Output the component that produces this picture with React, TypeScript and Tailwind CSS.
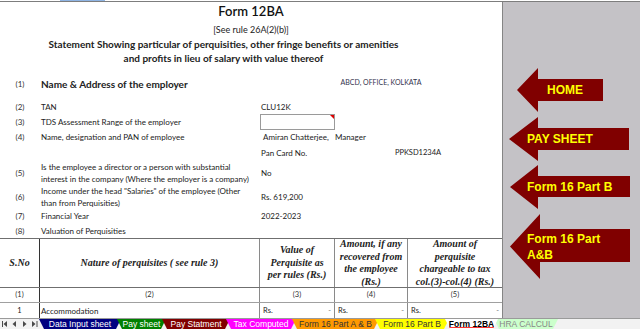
import React from 'react';

const sans = "font-['Lato','Liberation_Sans',sans-serif]";

function InfoRow({
  n,
  h,
  label,
  children,
}: {
  n?: string;
  h: string;
  label?: React.ReactNode;
  children?: React.ReactNode;
}) {
  return (
    <div className={`flex items-center ${h}`}>
      <div className="w-[40px] text-center text-[8px] text-[#333]">{n}</div>
      <div className="w-[220px] pl-[1px] text-[8px] leading-[12px]">{label}</div>
      <div className="flex-1 text-[8px] flex items-center h-full">{children}</div>
    </div>
  );
}

function Sheet() {
  return (
    <div className={`w-[502px] flex flex-col text-[#222] ${sans}`}>
      <div className="h-[20px] flex items-center justify-center text-[13px] font-semibold text-[#111]">Form 12BA</div>
      <div className="h-[15px] flex items-center justify-center text-[9px]">[See rule 26A(2)(b)]</div>
      <div className="h-[15px] flex items-center justify-center pr-[55px] text-[10px] font-bold">
        Statement Showing particular of perquisities, other fringe benefits or amenities
      </div>
      <div className="h-[12px] flex items-center justify-center pr-[55px] text-[10px] font-bold">
        and profits in lieu of salary with value thereof
      </div>
      <div className="h-[11px]" />
      <div className="flex items-center h-[18px]">
        <div className="w-[40px] text-center text-[8px] text-[#333]">(1)</div>
        <div className="w-[220px] pl-[1px] text-[10px] font-bold text-[#222]">Name &amp; Address of the employer</div>
        <div className="flex-1 text-center text-[7px] text-[#33334d] -mt-[4px]">ABCD, OFFICE, KOLKATA</div>
      </div>
      <div className="h-[6px]" />
      <InfoRow n="(2)" h="h-[15px]" label="TAN">
        <span className="pl-[1px]">CLU12K</span>
      </InfoRow>
      <InfoRow n="(3)" h="h-[16px]" label="TDS Assessment Range of the employer">
        <div className="relative w-[75px] h-full border border-[#9a9a9a]">
          <div className="absolute right-0 top-0 w-0 h-0 border-t-[4px] border-l-[4px] border-t-[#e00000] border-l-transparent" />
        </div>
      </InfoRow>
      <InfoRow n="(4)" h="h-[14px]" label="Name, designation and PAN of employee">
        <span className="pl-[3px] whitespace-pre">Amiran Chatterjee,   Manager</span>
      </InfoRow>
      <InfoRow h="h-[17px]">
        <span className="w-[74px] pl-[1px]">Pan Card No.</span>
        <span className="w-[168px] text-center text-[7.5px]">PPKSD1234A</span>
      </InfoRow>
      <InfoRow
        n="(5)"
        h="h-[24px]"
        label={
          <>
            Is the employee a director or a person with substantial
            <br />
            interest in the company (Where the employer is a company)
          </>
        }
      >
        <span className="pl-[1px]">No</span>
      </InfoRow>
      <InfoRow
        n="(6)"
        h="h-[23px]"
        label={
          <>
            Income under the head "Salaries" of the employee (Other
            <br />
            than from Perquisities)
          </>
        }
      >
        <span className="pl-[1px]">Rs. 619,200</span>
      </InfoRow>
      <InfoRow n="(7)" h="h-[15px]" label="Financial Year">
        <span className="pl-[1px]">2022-2023</span>
      </InfoRow>
      <InfoRow n="(8)" h="h-[15px]" label="Valuation of Perquisities" />

      <div className="flex h-[50px] border-y border-[#6f6f6f] font-['Liberation_Serif',serif] font-bold italic text-[10px] leading-[12.5px] text-center text-[#222]">
        <div className="w-[40px] border-r border-[#333] flex items-center justify-center">S.No</div>
        <div className="w-[220px] border-r border-[#8a8a8a] flex items-center justify-center">Nature of perquisites ( see rule 3)</div>
        <div className="w-[75px] border-r border-[#8a8a8a] flex items-center justify-center">
          Value of
          <br />
          Perquisite as
          <br />
          per rules (Rs.)
        </div>
        <div className="w-[73px] border-r border-[#8a8a8a] flex items-center justify-center">
          Amount, if any
          <br />
          recovered from
          <br />
          the employee
          <br />
          (Rs.)
        </div>
        <div className="w-[94px] flex items-center justify-center">
          Amount of
          <br />
          perquisite
          <br />
          chargeable to tax
          <br />
          col.(3)-col.(4) (Rs.)
        </div>
      </div>
      <div className="flex h-[15px] border-b border-[#a0a0a0] text-[7.5px] text-center text-[#333]">
        <div className="w-[40px] border-r border-[#333] flex items-center justify-center">(1)</div>
        <div className="w-[220px] border-r border-[#8a8a8a] flex items-center justify-center">(2)</div>
        <div className="w-[75px] border-r border-[#8a8a8a] flex items-center justify-center">(3)</div>
        <div className="w-[73px] border-r border-[#8a8a8a] flex items-center justify-center">(4)</div>
        <div className="w-[94px] flex items-center justify-center">(5)</div>
      </div>
      <div className="flex flex-1 text-[7.5px] text-[#222]">
        <div className="w-[40px] border-r border-[#333] flex items-center justify-center">1</div>
        <div className="w-[220px] border-r border-[#8a8a8a] flex items-center pl-[1px] text-[8px]">Accommodation</div>
        <div className="w-[75px] border-r border-[#8a8a8a] flex items-center justify-between px-[3px]">
          <span>Rs.</span>
          <span className="text-[#777]">-</span>
        </div>
        <div className="w-[73px] border-r border-[#8a8a8a] flex items-center justify-between px-[3px]">
          <span>Rs.</span>
          <span className="text-[#777]">-</span>
        </div>
        <div className="w-[94px] flex items-center justify-between px-[3px]">
          <span>Rs.</span>
          <span className="text-[#777]">-</span>
        </div>
      </div>
    </div>
  );
}

function Arrow({
  w,
  h,
  head,
  top,
  bottom,
  className,
  textClass,
  children,
}: {
  w: number;
  h: number;
  head: number;
  top: number;
  bottom: number;
  className: string;
  textClass: string;
  children: React.ReactNode;
}) {
  const pts = `0,${h / 2} ${head},0 ${head},${top} ${w},${top} ${w},${bottom} ${head},${bottom} ${head},${h} `;
  return (
    <div className={`relative ${className}`}>
      <svg width={w} height={h} className="block">
        <polygon points={pts} fill="#800000" />
      </svg>
      <div
        className={`absolute top-0 h-full flex items-center font-['Liberation_Sans',Arial,sans-serif] font-bold text-[12px] leading-[16px] text-[#ffff00] ${textClass}`}
      >
        {children}
      </div>
    </div>
  );
}

function Panel() {
  return (
    <div className="flex-1 bg-[#c4c2c6] border-l border-[#858585] flex flex-col">
      <Arrow w={86} h={44} head={21} top={11} bottom={33} className="mt-[66px] ml-[14px] w-[86px] h-[44px]" textClass="left-[30px]">
        HOME
      </Arrow>
      <Arrow w={120} h={44} head={29} top={11} bottom={33} className="mt-[5px] ml-[6px] w-[120px] h-[44px]" textClass="left-[18px]">
        PAY SHEET
      </Arrow>
      <Arrow w={120} h={44} head={28} top={11} bottom={32} className="mt-[4px] ml-[7px] w-[120px] h-[44px]" textClass="left-[17px]">
        Form 16 Part B
      </Arrow>
      <Arrow w={120} h={65} head={30} top={15} bottom={48} className="mt-[5px] ml-[7px] w-[120px] h-[65px]" textClass="left-[17px]">
        <span>
          Form 16 Part
          <br />
          A&amp;B
        </span>
      </Arrow>
    </div>
  );
}

const tabs = [
  { label: 'Data Input sheet', cls: 'w-[82px] bg-[#000080] text-white' },
  { label: 'Pay sheet', cls: 'w-[49px] bg-[#008000] text-white' },
  { label: 'Pay Statment', cls: 'w-[68px] bg-[#800000] text-white' },
  { label: 'Tax Computed', cls: 'w-[70px] bg-[#ff00ff] text-white' },
  { label: 'Form 16 Part A & B', cls: 'w-[87px] bg-[#ff9900] text-[#333]' },
  { label: 'Form 16 Part B', cls: 'w-[74px] bg-[#ffff00] text-[#333]' },
  { label: 'Form 12BA', cls: 'w-[53px] bg-white text-black font-bold z-10', active: true },
  { label: 'HRA CALCUL', cls: 'w-[64px] bg-[#ccffcc] text-[#888]' },
];

function NavBtn({ d }: { d: string }) {
  return (
    <svg width="6" height="6" viewBox="0 0 6 6" className="block">
      <path d={d} fill="#4a4a4a" />
    </svg>
  );
}

function Tabs() {
  return (
    <div className="h-[11px] flex items-stretch bg-[#f2f2f2] border-t border-[#9a9a9a] font-['Liberation_Sans',sans-serif] text-[8.5px]">
      <div className="w-[39px] flex items-center gap-[4px] pl-[2px]">
        <NavBtn d="M0 0h1v6H0zM5 0v6L1.5 3z" />
        <NavBtn d="M4 0v6L0.5 3z" />
        <NavBtn d="M1 0v6L4.5 3z" />
        <NavBtn d="M0 0v6L3.5 3zM4.5 0h1v6h-1z" />
      </div>
      {tabs.map((t, i) => (
        <div
          key={t.label}
          className={`relative shrink-0 flex items-center justify-center leading-none [clip-path:polygon(0_0,100%_0,calc(100%-5px)_100%,5px_100%)] ${
            i > 0 ? '-ml-[4px]' : ''
          } ${t.cls}`}
        >
          {t.label}
          {t.active && <div className="absolute bottom-[1px] left-[4px] right-[4px] h-[1px] bg-[#ff3333]" />}
        </div>
      ))}
    </div>
  );
}

export default function App() {
  return (
    <div className="w-[640px] h-[329px] flex flex-col bg-white overflow-hidden">
      <div className="h-[1px] flex">
        <div className="w-[60px]" />
        <div className="w-[45px] bg-[#8eb4e3]" />
      </div>
      <div className="h-[1px] bg-[#7d7d7d]" />
      <div className="flex flex-1 min-h-0">
        <Sheet />
        <Panel />
      </div>
      <Tabs />
    </div>
  );
}
